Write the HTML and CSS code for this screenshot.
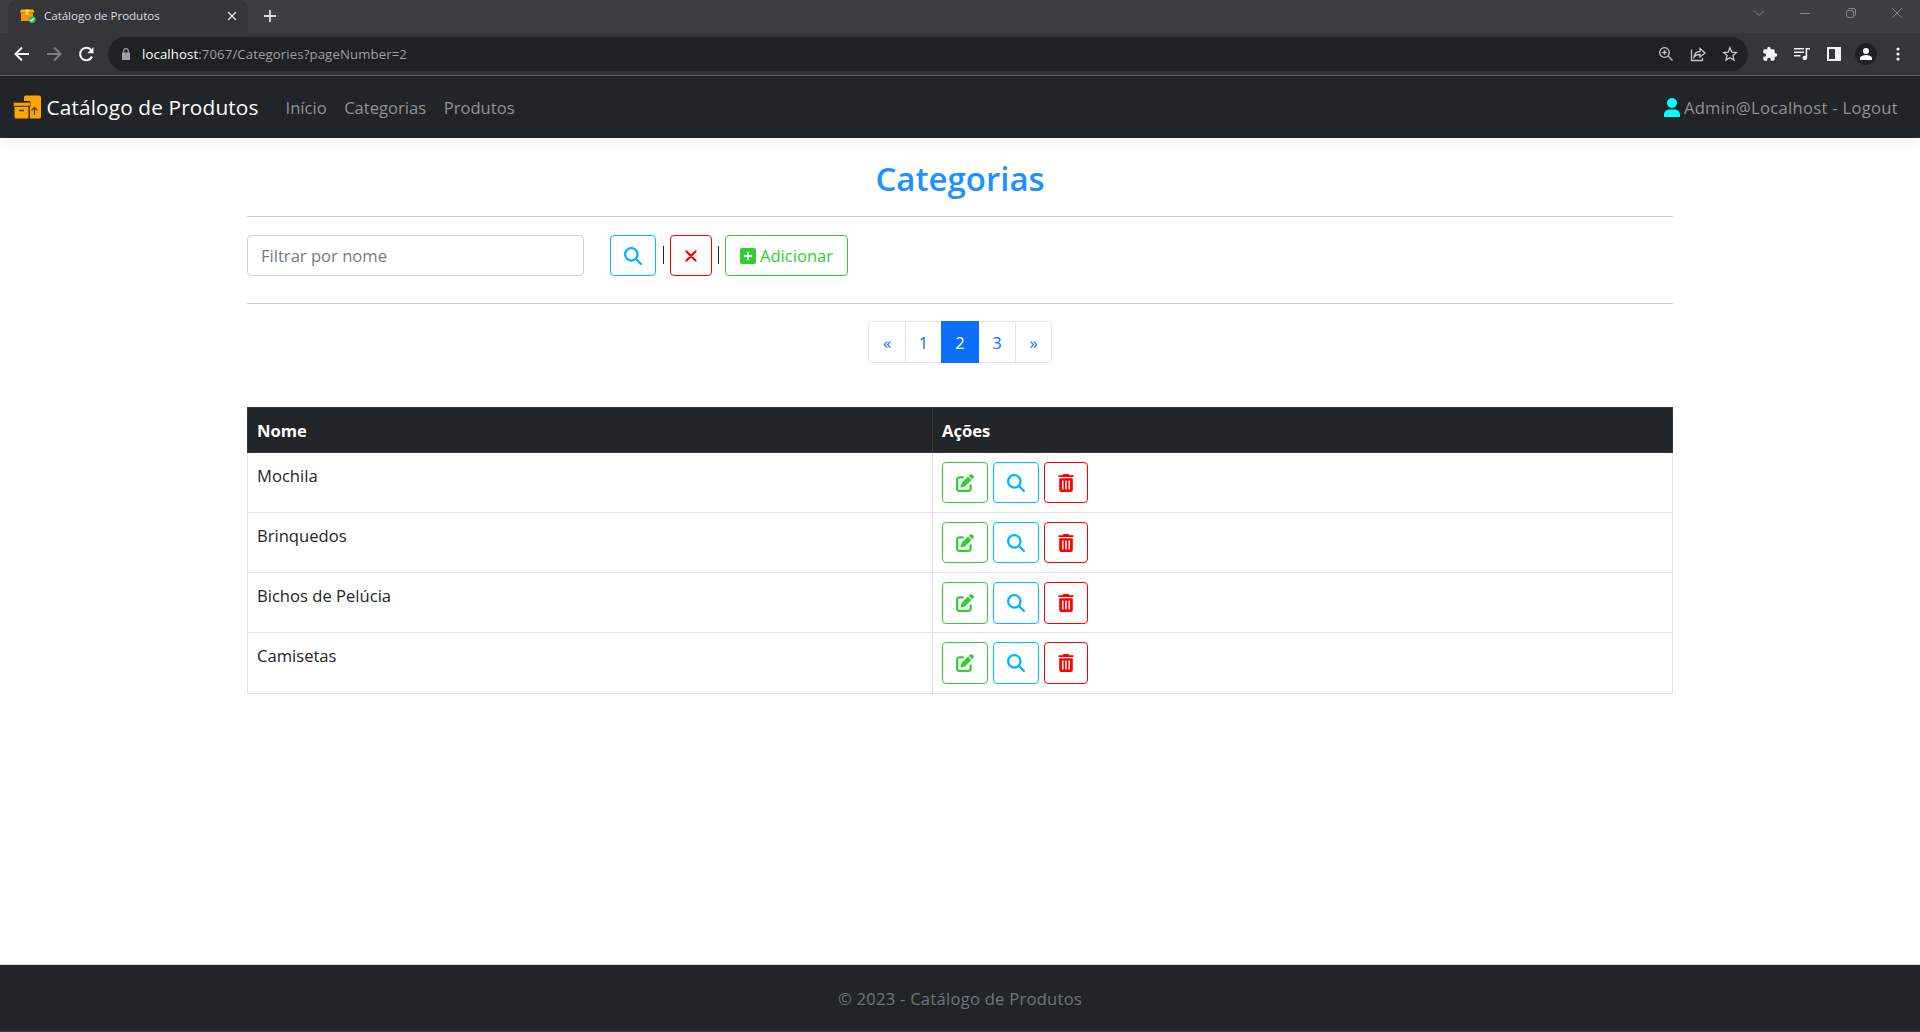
FILE: index.html
```html
<!DOCTYPE html>
<html lang="pt-BR">
<head>
<meta charset="utf-8">
<title>Catálogo de Produtos</title>
<link rel="stylesheet" href="styles.css">
</head>
<body>
<svg width="0" height="0" class="defs" aria-hidden="true">
  <symbol id="search" viewBox="0 0 512 512"><path d="M416 208c0 45.900-14.900 88.300-40 122.700L502.600 457.400c12.500 12.500 12.500 32.800 0 45.300s-32.800 12.500-45.300 0L330.700 376c-34.400 25.200-76.800 40-122.700 40C93.100 416 0 322.900 0 208S93.100 0 208 0S416 93.100 416 208zM208 352a144 144 0 1 0 0-288 144 144 0 1 0 0 288z"/></symbol>
  <symbol id="edit" viewBox="0 0 512 512"><path d="M471.600 21.700c-21.900-21.900-57.300-21.900-79.200 0L362.300 51.700l97.900 97.900 30.100-30.100c21.900-21.900 21.900-57.300 0-79.200L471.600 21.700zm-299.200 220c-6.100 6.100-10.800 13.600-13.500 21.900l-29.600 88.800c-2.900 8.600-.6 18.100 5.800 24.600s15.900 8.700 24.600 5.800l88.800-29.600c8.200-2.700 15.700-7.400 21.900-13.500L437.700 172.300 339.700 74.300 172.400 241.700zM96 64C43 64 0 107 0 160V416c0 53 43 96 96 96H352c53 0 96-43 96-96V320c0-17.700-14.300-32-32-32s-32 14.300-32 32v96c0 17.700-14.300 32-32 32H96c-17.700 0-32-14.300-32-32V160c0-17.700 14.300-32 32-32h96c17.700 0 32-14.300 32-32s-14.300-32-32-32H96z"/></symbol>
  <symbol id="trash" viewBox="0 0 16 18"><path fill-rule="evenodd" d="M5.500 0h5l1 1.200H15a1 1 0 0 1 0 1.900H1a1 1 0 0 1 0-1.900h3.500zM1.200 4.300h13.600V16a2 2 0 0 1-2 2H3.200a2 2 0 0 1-2-2zM4 6.500v9h1.500v-9zM7.250 6.500v9h1.500v-9zM10.500 6.500v9H12v-9z"/></symbol>
</svg>

<div class="tabstrip">
  <div class="tab">
    <svg class="favicon" viewBox="0 0 16 16"><path fill="#ffb300" d="M1 1.500h12l1.500 3H0z"/><path fill="#ff8f00" d="M1 4.500h12V13H1z"/><path fill="#ffd54f" d="M5.500 1.500h3V7h-3z"/><circle cx="12" cy="11.500" r="3.600" fill="#2ebd6b"/><path d="m10.300 11.600 1.300 1.300 2.200-2.600" fill="none" stroke="#fff" stroke-width="1.100"/></svg>
    <span class="tab-title">Catálogo de Produtos</span>
    <svg class="tab-close" viewBox="0 0 10 10"><path d="m1 1 8 8M9 1 1 9"/></svg>
  </div>
  <svg class="newtab" viewBox="0 0 12 12"><path d="M6 0v12M0 6h12"/></svg>
  <div class="winctl">
    <svg viewBox="0 0 12 12"><path d="m1 3.500 5 5 5-5"/></svg>
    <svg viewBox="0 0 12 12"><path d="M1 6.500h10"/></svg>
    <svg viewBox="0 0 12 12"><rect x="1.500" y="3.500" width="7" height="7" rx="1.500"/><path d="M3.500 1.500H9A1.500 1.500 0 0 1 10.500 3v5.500"/></svg>
    <svg viewBox="0 0 12 12"><path d="m1 1 10 10M11 1 1 11"/></svg>
  </div>
</div>

<div class="toolbar">
  <svg class="tb" viewBox="0 0 16 16"><path d="M15 8H2M8 1.500 1.500 8 8 14.500"/></svg>
  <svg class="tb fwd" viewBox="0 0 16 16"><path d="M1 8h13M8 1.500 14.500 8 8 14.500"/></svg>
  <svg class="tb" viewBox="0 0 16 16"><path d="M14 10.500A6.200 6.200 0 1 1 13 4"/><path class="solid" d="M15.500 1v6.200H9.300z"/></svg>
  <div class="omnibox">
    <svg class="lock" viewBox="0 0 10 12"><path fill="#9aa0a6" d="M1 4.500h8V12H1z"/><path fill="none" stroke="#9aa0a6" stroke-width="1.200" d="M2.700 5V3a2.300 2.300 0 0 1 4.600 0v2"/></svg>
    <span class="url"><b>localhost</b>:7067/Categories?pageNumber=2</span>
    <div class="omni-icons">
      <svg viewBox="0 0 16 16"><circle cx="6.500" cy="6.500" r="4.800"/><path d="m10 10 4.500 4.500M6.500 4.200v4.600M4.200 6.500h4.600"/></svg>
      <svg viewBox="0 0 16 16"><path d="M1.500 3.500v11h11V12M4 11c.5-4 3-5.500 6-5.500V2.500L15 7l-5 4V8.500C7.500 8.500 5.500 9 4 11z"/></svg>
      <svg viewBox="0 0 16 16"><path d="m8 1.800 1.800 4.300 4.700.4-3.600 3 1.100 4.600L8 11.700l-4 2.400 1.100-4.600-3.600-3 4.700-.4z"/></svg>
    </div>
  </div>
  <div class="ext-icons">
    <svg viewBox="0 0 24 24"><path fill="#f1f3f4" d="M20.500 11H19V7a2 2 0 0 0-2-2h-4V3.500a2.500 2.500 0 0 0-5 0V5H4a2 2 0 0 0-2 2v3.800h1.500a2.700 2.700 0 0 1 0 5.400H2V20a2 2 0 0 0 2 2h3.800v-1.500a2.700 2.700 0 0 1 5.400 0V22H17a2 2 0 0 0 2-2v-4h1.500a2.500 2.500 0 0 0 0-5z"/></svg>
    <svg viewBox="0 0 16 16"><g fill="none" stroke="#f1f3f4" stroke-width="1.600"><path d="M0 2.800h10M0 6.300h10M0 9.800h6.500M12.400 12V2.800H16"/></g><circle cx="10.800" cy="12" r="2.300" fill="#f1f3f4"/></svg>
    <svg viewBox="0 0 16 16"><path fill="#f1f3f4" fill-rule="evenodd" d="M1 1h14v14H1zM3 3v10h6V3z"/></svg>
    <span class="avatar"><svg viewBox="0 0 12 12"><path fill="#fff" d="M6 0a3 3 0 1 1 0 6 3 3 0 0 1 0-6zM0 12V10c0-2 4-3 6-3s6 1 6 3v2z"/></svg></span>
    <svg viewBox="0 0 16 16"><g fill="#f1f3f4"><circle cx="8" cy="3" r="1.600"/><circle cx="8" cy="8" r="1.600"/><circle cx="8" cy="13" r="1.600"/></g></svg>
  </div>
</div>

<header class="navbar">
  <svg class="logo" viewBox="0 0 28 24"><path fill="orange" d="M13 .5h13a2 2 0 0 1 2 2v19a2 2 0 0 1-2 2h-9V6h-6V2.500a2 2 0 0 1 2-2z"/><path fill="orange" stroke="#5c3d12" stroke-width=".8" d="M.4 7.400h16.900v3.800H.4z"/><path fill="orange" d="M1.500 12h14v11.500H3A1.500 1.500 0 0 1 1.500 22z"/><path fill="none" stroke="#5c3d12" stroke-width=".9" d="M16.200 11.500v12"/><path d="M6 15.500h5M21.500 20v-7.500M18.500 15.500l3-3 3 3" fill="none" stroke="#5c3d12" stroke-width="1.300"/></svg>
  <span class="brand">Catálogo de Produtos</span>
  <nav class="links"><a>Início</a><a>Categorias</a><a>Produtos</a></nav>
  <div class="user"><svg viewBox="0 0 16 19"><path fill="aqua" d="M8 0a5 5 0 1 1 0 10A5 5 0 0 1 8 0zM0 19v-2c0-4 3-5.500 6-5.500h4c3 0 6 1.500 6 5.500v2z"/></svg><span class="login">Admin@Localhost - Logout</span></div>
</header>

<main>
  <h1>Categorias</h1>
  <hr>
  <form class="filter">
    <div class="input">Filtrar por nome</div>
    <a class="btn blue"><svg><use href="#search"/></svg></a>
    <i class="bar"></i>
    <a class="btn red narrow"><svg viewBox="0 0 12 12"><path d="m1.500 1.500 9 9m0-9-9 9" fill="none" stroke="red" stroke-width="2.200" stroke-linecap="round"/></svg></a>
    <i class="bar second"></i>
    <a class="btn green add"><svg viewBox="0 0 16 16"><path fill-rule="evenodd" d="M2 0h12a2 2 0 0 1 2 2v12a2 2 0 0 1-2 2H2a2 2 0 0 1-2-2V2a2 2 0 0 1 2-2zM7.100 4v3.100H4v1.800h3.100V12h1.800V8.900H12V7.100H8.900V4z"/></svg><span>Adicionar</span></a>
  </form>
  <hr>
  <ul class="pagination"><li>«</li><li>1</li><li class="active">2</li><li>3</li><li>»</li></ul>
  <table>
    <thead><tr><th>Nome</th><th>Ações</th></tr></thead>
    <tbody>
      <tr><td>Mochila</td><td><div class="actions"><a class="btn green"><svg><use href="#edit"/></svg></a><a class="btn blue"><svg><use href="#search"/></svg></a><a class="btn red trash"><svg><use href="#trash"/></svg></a></div></td></tr>
      <tr><td>Brinquedos</td><td><div class="actions"><a class="btn green"><svg><use href="#edit"/></svg></a><a class="btn blue"><svg><use href="#search"/></svg></a><a class="btn red trash"><svg><use href="#trash"/></svg></a></div></td></tr>
      <tr><td>Bichos de Pelúcia</td><td><div class="actions tall"><a class="btn green"><svg><use href="#edit"/></svg></a><a class="btn blue"><svg><use href="#search"/></svg></a><a class="btn red trash"><svg><use href="#trash"/></svg></a></div></td></tr>
      <tr class="last"><td>Camisetas</td><td><div class="actions tall"><a class="btn green"><svg><use href="#edit"/></svg></a><a class="btn blue"><svg><use href="#search"/></svg></a><a class="btn red trash"><svg><use href="#trash"/></svg></a></div></td></tr>
    </tbody>
  </table>
</main>
<footer>© 2023 - Catálogo de Produtos</footer>
</body>
</html>
```
FILE: styles.css
```css
* { box-sizing: border-box; }
body { margin: 0; height: 1032px; display: flex; flex-direction: column; overflow: hidden; background: #fff; color: #212529; font-family: "Open Sans", "Noto Sans", sans-serif; font-size: 16.6px; line-height: 26px; }
.defs { position: absolute; }
svg { display: block; flex: none; }

.tabstrip { height: 33px; flex: none; background: #3c4043; display: flex; align-items: center; padding-left: 8px; }
.tab { width: 240px; height: 33px; background: #35363a; border-radius: 8px 8px 0 0; display: flex; align-items: center; padding: 0 11px 2px 12px; }
.favicon { width: 16px; height: 16px; }
.tab-title { margin: 0 auto 0 8px; font-size: 11.6px; line-height: 16px; letter-spacing: -.05px; color: #dadce0; white-space: nowrap; }
.tab-close { width: 10px; height: 10px; fill: none; stroke: #dadce0; stroke-width: 1.4; }
.newtab { width: 12px; height: 12px; margin: 0 0 1px 16px; fill: none; stroke: #dadce0; stroke-width: 1.8; }
.winctl { margin-left: auto; display: flex; gap: 34px; padding: 0 17px 7px 0; }
.winctl svg { width: 12px; height: 12px; fill: none; stroke: #85888a; }

.toolbar { height: 43px; flex: none; background: #35363a; border-bottom: 1px solid #5f6063; display: flex; align-items: center; padding-left: 14px; }
.tb { width: 16px; height: 16px; margin-right: 16px; fill: none; stroke: #f1f3f4; stroke-width: 2; }
.fwd { stroke: #7d7e81; }
.solid { fill: #f1f3f4; stroke: none; }
.omnibox { flex: 1; margin-left: -2px; height: 34px; border-radius: 17px; background: #202124; display: flex; align-items: center; padding: 0 10px 0 13px; }
.lock { width: 10px; height: 12px; }
.url { margin-left: 11px; font-size: 13.2px; line-height: 18px; letter-spacing: .11px; color: #9aa0a6; white-space: nowrap; }
.url b { color: #fff; font-weight: 400; }
.omni-icons { margin-left: auto; display: flex; gap: 16px; fill: none; stroke: #c4c7c9; stroke-width: 1.3; }
.omni-icons svg { width: 16px; height: 16px; }
.ext-icons { display: flex; align-items: center; gap: 16px; padding: 0 14px 0 14px; }
.ext-icons svg { width: 16px; height: 16px; }
.avatar { width: 22px; height: 22px; border-radius: 11px; background: #202124; display: grid; place-items: center; margin: 0 -3px; }
.ext-icons .avatar svg { width: 12px; height: 12px; }

.navbar { height: 62px; flex: none; background: #212529; display: flex; align-items: center; padding: 0 22px 0 13px; box-shadow: 0 4px 13px rgba(0,0,0,.06); white-space: nowrap; }
.logo { width: 28px; height: 24px; }
.brand { margin-left: 5.5px; font-size: 20.8px; line-height: 30px; letter-spacing: .14px; color: #fff; }
.links { display: flex; gap: 17.5px; margin-left: 27px; padding-top: 1px; color: #909294; }
.user { margin-left: auto; display: flex; align-items: center; gap: 4px; color: #909294; }
.user svg { width: 16px; height: 19px; }
.login { padding-top: 1px; letter-spacing: .3px; }

main { flex: 1; width: 1426px; margin: 0 auto; }
h1 { margin: 17px 0; height: 44px; padding-top: 2px; text-align: center; font-size: 33px; line-height: 44px; font-weight: 600; color: #1e90ff; }
hr { margin: 0; height: 1px; border: 0; background: #c8c9ca; }
.filter { display: flex; height: 41px; margin: 18px 0 27px; }
.input { width: 337px; border: 1px solid #ced4da; border-radius: 4px; padding: 7px 13px; color: #757b81; margin-right: 26px; }
.btn { width: 46px; height: 41px; border: 1px solid; border-radius: 4px; display: flex; align-items: center; justify-content: center; }
.btn svg { width: 18px; height: 18px; fill: currentColor; }
.blue { color: #00b7ff; border-color: #00bfff; }
.red { color: red; }
.green { color: #32cd32; }
.btn.narrow { width: 42px; }
.btn.narrow svg { width: 12px; height: 12px; }
.bar { width: 1px; height: 18px; background: #212529; margin: 11px 6px 0 7px; }
.bar.second { margin-left: 6px; }
.btn.add { width: 123px; gap: 4px; }
.add svg { width: 16px; height: 16px; }
.btn.trash { width: 44px; }
.trash svg { width: 16px; height: 18px; }

.pagination { list-style: none; margin: 17px auto 44px; padding: 0; width: 184px; height: 42px; display: grid; grid-template: 40px / 36px 36px 38px 36px 36px; border: 1px solid #dee2e6; border-radius: 4px; color: #0d6efd; }
.pagination li { height: 40px; text-align: center; line-height: 41px; border-left: 1px solid #dee2e6; }
.pagination li:first-child, .pagination .active + li { border-left: 0; }
.pagination .active { height: 42px; background: #0d6efd; color: #fff; border: 0; margin: -1px 0; line-height: 43px; }

table { width: 1426px; border-collapse: collapse; table-layout: fixed; }
th { height: 45px; text-align: left; background: #212529; color: #fff; border: 1px solid #373b3e; padding: 1px 9px 0; line-height: 26px; }
th:first-child { width: 685px; }
td { border: 1px solid #dee2e6; padding: 9px; vertical-align: top; line-height: 26px; }
td:first-child { padding-top: 10px; }
.actions { display: flex; gap: 5px; }
.tall .btn { height: 42px; }
.tall { height: 41px; }
.last .tall { height: 42px; }

footer { height: 68px; flex: none; background: #212529; border-top: 1px solid #dee2e6; border-bottom: 1px solid #413f5c; text-align: center; line-height: 68px; letter-spacing: .25px; color: #6c757d; }
```
